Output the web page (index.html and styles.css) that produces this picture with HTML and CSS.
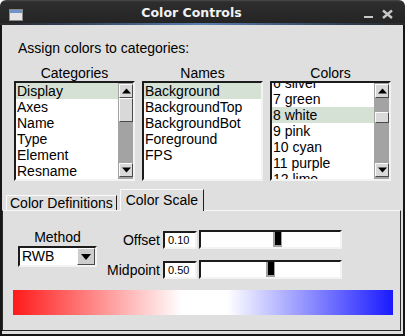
FILE: index.html
```html
<!DOCTYPE html>
<html>
<head>
<meta charset="utf-8">
<link rel="stylesheet" href="styles.css">
</head>
<body>
<div class="window">
  <div class="titlebar">
    <svg class="app-icon" width="14" height="12" viewBox="0 0 14 12">
      <rect x="0.5" y="0.5" width="13" height="11" fill="#e4e4e4" stroke="#8a8a8a"/>
      <rect x="1" y="1" width="12" height="3" fill="#6f93c8"/>
    </svg>
    <span class="title">Color Controls</span>
    <svg class="ctrls" width="30" height="10" viewBox="0 0 30 10">
      <rect x="0" y="7" width="9" height="2" fill="#c8c8c8"/>
      <path d="M19 1.5 L28 9 M28 1.5 L19 9" stroke="#c8c8c8" stroke-width="2.4"/>
    </svg>
  </div>
  <div class="titleline"></div>
  <div class="client">
    <p class="prompt">Assign colors to categories:</p>
    <div class="lists">
      <div class="col">
        <div class="head">Categories</div>
        <div class="listbox">
          <div class="items">
            <div class="row sel">Display</div>
            <div class="row">Axes</div>
            <div class="row">Name</div>
            <div class="row">Type</div>
            <div class="row">Element</div>
            <div class="row">Resname</div>
          </div>
          <div class="scroll">
            <div class="sbtn"><svg width="9" height="6" viewBox="0 0 9 6"><path d="M0 5.5 L4.5 0.5 L9 5.5Z" fill="#000"/></svg></div>
            <div class="track"><div class="thumb thumb-cat"></div></div>
            <div class="sbtn"><svg width="9" height="6" viewBox="0 0 9 6"><path d="M0 0.5 L4.5 5.5 L9 0.5Z" fill="#000"/></svg></div>
          </div>
        </div>
      </div>
      <div class="col">
        <div class="head">Names</div>
        <div class="listbox">
          <div class="items">
            <div class="row sel">Background</div>
            <div class="row">BackgroundTop</div>
            <div class="row">BackgroundBot</div>
            <div class="row">Foreground</div>
            <div class="row">FPS</div>
          </div>
        </div>
      </div>
      <div class="col">
        <div class="head">Colors</div>
        <div class="listbox">
          <div class="items">
            <div class="scrolled">
              <div class="row">6 silver</div>
              <div class="row">7 green</div>
              <div class="row sel">8 white</div>
              <div class="row">9 pink</div>
              <div class="row">10 cyan</div>
              <div class="row">11 purple</div>
              <div class="row">12 lime</div>
            </div>
          </div>
          <div class="scroll">
            <div class="sbtn"><svg width="9" height="6" viewBox="0 0 9 6"><path d="M0 5.5 L4.5 0.5 L9 5.5Z" fill="#000"/></svg></div>
            <div class="track track-col"><div class="thumb thumb-col"></div></div>
            <div class="sbtn"><svg width="9" height="6" viewBox="0 0 9 6"><path d="M0 0.5 L4.5 5.5 L9 0.5Z" fill="#000"/></svg></div>
          </div>
        </div>
      </div>
    </div>
    <div class="tabs">
      <div class="tab">Color Definitions</div>
      <div class="tab active">Color Scale</div>
    </div>
    <div class="panel">
      <div class="panel-top">
        <div class="method">
          <div class="method-label">Method</div>
          <div class="combo">
            <span class="combo-text">RWB</span>
            <span class="combo-btn"><svg width="10" height="6" viewBox="0 0 10 6"><path d="M0 0 L10 0 L5 6Z" fill="#000"/></svg></span>
          </div>
        </div>
        <div class="params">
          <div class="plabel">Offset</div>
          <div class="entry">0.10</div>
          <div class="slider"><div class="sthumb" style="margin-left:72px"></div></div>
          <div class="plabel">Midpoint</div>
          <div class="entry">0.50</div>
          <div class="slider"><div class="sthumb" style="margin-left:65px"></div></div>
        </div>
      </div>
      <div class="scale-bar"></div>
    </div>
  </div>
</div>
</body>
</html>
```
FILE: styles.css
```css
* { box-sizing: border-box; margin: 0; padding: 0; }
html, body { background: #ffffff; }
body {
  margin: 0;
  font-family: "Liberation Sans", Arial, sans-serif;
  font-size: 14px;
  line-height: 16px;
  color: #000;
}
.window {
  width: 405px;
  height: 336px;
  display: flex;
  flex-direction: column;
}
.titlebar {
  height: 23px;
  flex: none;
  display: flex;
  align-items: flex-start;
  background: linear-gradient(#4a4a4a 0, #2e2e2e 2px, #242424 100%);
  border-radius: 6px 6px 0 0;
}
.app-icon { margin: 9px 0 0 9px; flex: none; }
.title {
  flex: 1;
  text-align: center;
  padding-right: 4px;
  margin-top: 6px;
  font-family: "DejaVu Sans", sans-serif;
  font-weight: bold;
  font-size: 12.5px;
  line-height: 14px;
  color: #f2f2f2;
}
.ctrls { margin: 9px 11px 0 0; flex: none; }
.titleline {
  height: 2px;
  flex: none;
  background: linear-gradient(90deg, #2a2a2a 0%, #2f3d52 15%, #5a7fb2 50%, #2f3d52 85%, #2a2a2a 100%);
}
.client {
  flex: 1;
  background: #dfdfdf;
  border: 2px solid #161616;
  border-top: 0;
  padding-top: 15px;
  display: flex;
  flex-direction: column;
}
.prompt { padding-left: 16px; }
.lists {
  margin: 9px 0 0 12px;
  display: grid;
  grid-template-columns: repeat(3, 121px);
  column-gap: 7px;
}
.head { text-align: center; }
.listbox {
  height: 100px;
  display: flex;
  background: #fff;
  border: 2px solid;
  border-color: #1c1c1c #f3f3f3 #f3f3f3 #1c1c1c;
}
.items { flex: 1; overflow: hidden; }
.row {
  height: 16px;
  padding-left: 1px;
  white-space: nowrap;
}
.row.sel { background: #d5e1d5; }
.scrolled { margin-top: -8px; }
.scroll {
  width: 15px;
  flex: none;
  background: #a3a3a3;
  display: flex;
  flex-direction: column;
  padding: 1px 0 2px 1px;
}
.sbtn {
  height: 14px;
  flex: none;
  background: #d9d9d9;
  border: 1px solid;
  border-color: #fbfbfb #4a4a4a #4a4a4a #fbfbfb;
  display: flex;
  align-items: center;
  justify-content: center;
}
.track { flex: 1; }
.track-col { padding-top: 14px; }
.thumb {
  background: #d9d9d9;
  border: 1px solid;
  border-color: #fbfbfb #4a4a4a #4a4a4a #fbfbfb;
}
.thumb-cat { height: 24px; }
.thumb-col { height: 11px; }
.tabs {
  display: flex;
  align-items: flex-end;
  height: 21px;
  margin-top: 9px;
  padding-left: 4px;
  gap: 3px;
  margin-bottom: -1px;
}
.tab {
  height: 16px;
  line-height: 15px;
  padding: 0 3px;
  border: 1px solid;
  border-bottom: 0;
  border-color: #fafafa #1e1e1e transparent #fafafa;
  background: #dfdfdf;
  white-space: nowrap;
}
.tab.active {
  height: 22px;
  padding: 2px 5px 0;
  line-height: 16px;
  position: relative;
  z-index: 1;
}
.panel {
  height: 121px;
  margin-right: 2px;
  border: 1px solid;
  border-color: #f7f7f7 #2a2a2a #2a2a2a #2a2a2a;
  padding-bottom: 15px;
}
.panel-top {
  height: 68px;
  display: flex;
  align-items: flex-start;
}
.method {
  width: 79px;
  margin: 18px 0 0 15px;
}
.method-label { text-align: center; }
.combo {
  margin-top: 1px;
  height: 21px;
  display: flex;
  align-items: stretch;
  background: #fff;
  border: 2px solid;
  border-color: #1c1c1c #f3f3f3 #f3f3f3 #1c1c1c;
}
.combo-text { flex: 1; padding-left: 2px; line-height: 17px; }
.combo-btn {
  width: 18px;
  flex: none;
  background: #cdcdcd;
  border: 1px solid;
  border-color: #fbfbfb #4a4a4a #4a4a4a #fbfbfb;
  display: flex;
  align-items: center;
  justify-content: center;
}
.params {
  margin-top: 19px;
  display: grid;
  grid-template-columns: 63px 37px 145px;
  grid-auto-rows: 19px;
  row-gap: 11px;
  align-items: center;
}
.plabel { text-align: right; white-space: nowrap; }
.entry {
  margin-left: 3px;
  width: 34px;
  height: 18px;
  background: #fff;
  border: 2px solid;
  border-color: #1c1c1c #f3f3f3 #f3f3f3 #1c1c1c;
  font-size: 11px;
  line-height: 14px;
  padding-left: 3px;
}
.slider {
  margin-left: 2px;
  width: 143px;
  height: 19px;
  background: #fff;
  border: 2px solid;
  border-color: #1c1c1c #f3f3f3 #f3f3f3 #1c1c1c;
}
.sthumb {
  width: 9px;
  height: 15px;
  background: #000;
  border-left: 2px solid #a0a0a0;
  border-right: 1px solid #a0a0a0;
  border-bottom: 2px solid #a0a0a0;
}
.scale-bar {
  margin: 11px 0 0 10px;
  width: 380px;
  height: 25px;
  background: linear-gradient(90deg, #ff1a1a 0%, #ffffff 44.5%, #ffffff 56.3%, #1a1aff 100%);
}
```
